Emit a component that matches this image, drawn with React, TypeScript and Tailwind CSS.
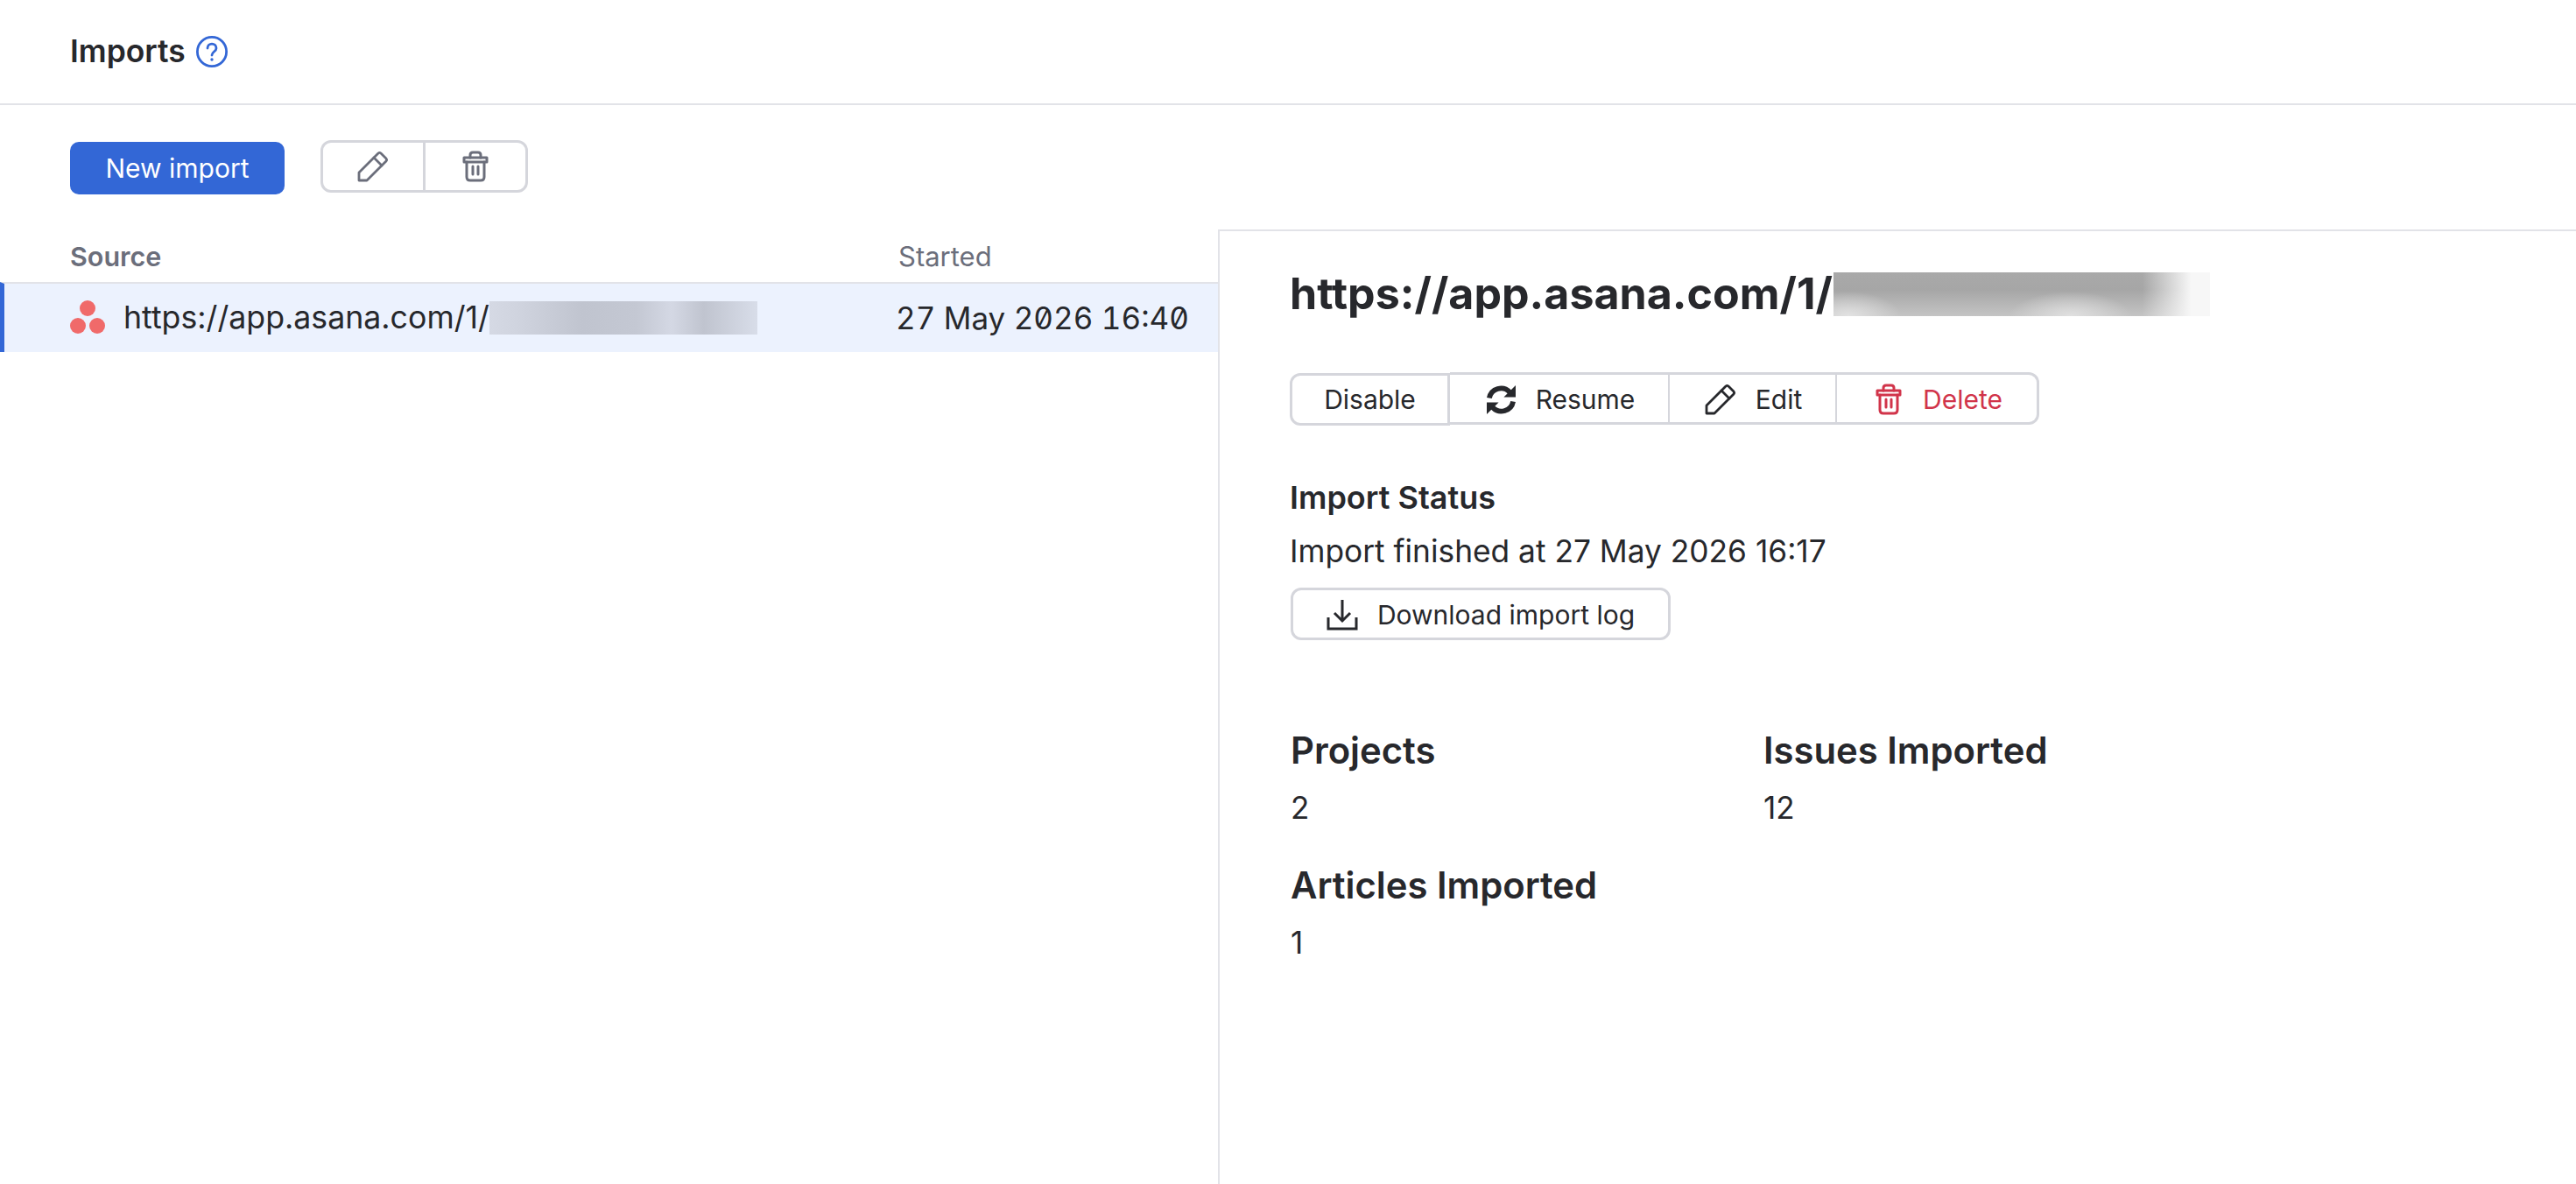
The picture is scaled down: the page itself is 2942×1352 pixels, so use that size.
import React from 'react';

const Pencil = ({ className }: { className?: string }) => (
  <svg viewBox="0 0 36 36" className={className} fill="none" stroke="currentColor" strokeWidth="2.8" strokeLinejoin="round" strokeLinecap="round">
    <path d="M2 25 L24 3 Q25.5 1.8 27 3 L33 9 Q34.2 10.5 33 12 L11 34 H2 Z" />
    <path d="M19 8 L28 17" />
  </svg>
);

const Trash = ({ className }: { className?: string }) => (
  <svg viewBox="0 0 30 36" className={className} fill="none" stroke="currentColor" strokeWidth="3" strokeLinejoin="round" strokeLinecap="round">
    <path d="M2 8 H28 V13 H2 Z" />
    <path d="M9 8 V5 Q9 2 12 2 H18 Q21 2 21 5 V8" />
    <path d="M5 13 V30 Q5 34 9 34 H21 Q25 34 25 30 V13" />
    <path d="M12 18 V27 M18 18 V27" />
  </svg>
);

const Sync = ({ className }: { className?: string }) => (
  <svg viewBox="0 0 36 36" className={className} fill="none" stroke="currentColor" strokeWidth="6">
    <path d="M4 16 A14 14 0 0 1 28 9" />
    <path d="M35 1 V15 H21 Z" fill="currentColor" stroke="none" />
    <path d="M32 20 A14 14 0 0 1 8 27" />
    <path d="M1 35 V21 H15 Z" fill="currentColor" stroke="none" />
  </svg>
);

const Download = ({ className }: { className?: string }) => (
  <svg viewBox="0 0 36 36" className={className} fill="none" stroke="currentColor" strokeWidth="3">
    <path d="M18 1 V25 M9 16 L18 25 L27 16" />
    <path d="M2 21 V34 H34 V21" />
  </svg>
);

const Asana = () => (
  <svg viewBox="0 0 40 40" className="w-10 h-10 shrink-0" fill="#f06a6a">
    <circle cx="20" cy="9" r="9" />
    <circle cx="9" cy="29" r="9" />
    <circle cx="31" cy="29" r="9" />
  </svg>
);

const Help = () => (
  <svg viewBox="0 0 36 36" className="w-9 h-9" fill="none" stroke="#3367d6" strokeWidth="2.8">
    <circle cx="18" cy="18" r="16.6" />
    <path d="M13 14 C13 7.5 23 7.5 23 14 C23 18 18 18 18 22" strokeLinecap="round" />
    <circle cx="18" cy="27" r="1.7" fill="#3367d6" stroke="none" />
  </svg>
);

const Stat = ({ title, value }: { title: string; value: string }) => (
  <div className="h-[154px]">
    <div className="text-[41.8px] leading-[60px] font-semibold text-[#27282c]">{title}</div>
    <div className="text-[35px] leading-[48px] mt-[11px] text-[#27282c]">{value}</div>
  </div>
);

const App = () => {
  return (
    <div className="w-[2942px] h-[1352px] bg-white overflow-hidden flex flex-col text-[#27282c] font-['Inter',sans-serif]">
      <div className="h-[120px] shrink-0 border-b-2 border-[#e2e3e8] flex items-center pl-[80px] gap-3">
        <span className="text-[35.4px] font-semibold">Imports</span>
        <Help />
      </div>

      <div className="h-[142px] shrink-0 flex items-start pl-[80px] pt-[40px] gap-[41px]">
        <button className="mt-[2px] w-[245px] h-[60px] rounded-[10px] bg-[#3367d6] text-white text-[30px]">New import</button>
        <div className="h-[60px] w-[237px] border-[3px] border-[#d5d6dc] rounded-[12px] flex text-[#6b6e7b]">
          <div className="flex-1 flex items-center justify-center border-r-[3px] border-[#d5d6dc]">
            <Pencil className="w-[36px] h-[36px]" />
          </div>
          <div className="flex-1 flex items-center justify-center">
            <Trash className="w-[30px] h-[36px]" />
          </div>
        </div>
      </div>

      <div className="flex-1 flex min-h-0">
        <div className="w-[1391px] shrink-0">
          <div className="h-[60px] pt-[2px] flex items-center pl-[80px] text-[31px] text-[#6b6e7b] relative">
            <span className="font-semibold text-[30.5px]">Source</span>
            <span className="absolute left-[1026px]">Started</span>
          </div>
          <div className="h-[80px] border-t-2 border-[#e2e3e8] bg-[#ecf2fe] border-l-[5px] border-l-[#3367d6] flex items-center pl-[75px]">
            <Asana />
            <span className="ml-[21px] text-[35.7px]">https://app.asana.com/1/</span>
            <div className="w-[306px] h-[38px] bg-[linear-gradient(90deg,#d5d9e4,#d0d4df_10%,#c0c4cf_35%,#c4c8d3_55%,#d4d8e4_68%,#c0c4cf_80%,#d8dde9_100%)]" />
            <span className="ml-auto mr-[33px] text-[35px] tabular-nums slashed-zero">27 May 2026 16:40</span>
          </div>
        </div>

        <div className="flex-1 border-l-2 border-t-2 border-[#e2e3e8] pl-[80px] pt-[46px]">
          <div className="flex items-center h-[50px]">
            <span className="text-[50.1px] font-bold">https://app.asana.com/1/</span>
            <div className="mt-[2px] ml-[1px] w-[430px] h-[50px] bg-[radial-gradient(ellipse_60px_28px_at_4%_100%,#e2e2e2,transparent),radial-gradient(ellipse_70px_28px_at_63%_100%,#e0e0e0,transparent),linear-gradient(90deg,transparent_82%,#f7f7f7_95%),linear-gradient(180deg,#a9a9a9,#a6a6a6_40%,#c4c4c4)]" />
          </div>

          <div className="mt-[65px] h-[61px] w-[856px] flex items-start text-[30px]">
            <div className="mt-[1px] w-[183px] h-[60px] flex items-center justify-center border-[3px] border-[#d5d6dc] rounded-l-[12px]">Disable</div>
            <div className="flex-1 h-[60px] flex border-y-[3px] border-r-[3px] border-[#d5d6dc] rounded-r-[12px]">
              <div className="w-[251px] pt-[2px] pl-[3px] flex items-center justify-center gap-[22px] border-r-2 border-[#d5d6dc]">
                <Sync className="w-[35px] h-[35px]" />
                Resume
              </div>
              <div className="w-[191px] pt-[2px] pl-[2px] flex items-center justify-center gap-[22px] border-r-2 border-[#d5d6dc]">
                <Pencil className="w-[36px] h-[36px]" />
                Edit
              </div>
              <div className="flex-1 pt-[2px] pl-[5px] flex items-center justify-center gap-[24px] text-[#d1344a]">
                <Trash className="w-[30px] h-[36px]" />
                Delete
              </div>
            </div>
          </div>

          <div className="mt-[62px] text-[36px] leading-[40px] font-semibold">Import Status</div>
          <div className="mt-[21px] text-[35.3px] leading-[42px]">Import finished at 27 May 2026 16:17</div>
          <div className="ml-[1px] mt-[20px] pt-[2px] h-[60px] w-[434px] border-[3px] border-[#d5d6dc] rounded-[12px] flex items-center justify-center gap-[22px] text-[30px]">
            <Download className="w-[36px] h-[36px]" />
            Download import log
          </div>

          <div className="ml-[1px] mt-[96px] w-[1100px] grid grid-cols-[540px_1fr]">
            <Stat title="Projects" value="2" />
            <Stat title="Issues Imported" value="12" />
            <Stat title="Articles Imported" value="1" />
          </div>
        </div>
      </div>
    </div>
  );
};

export default App;
